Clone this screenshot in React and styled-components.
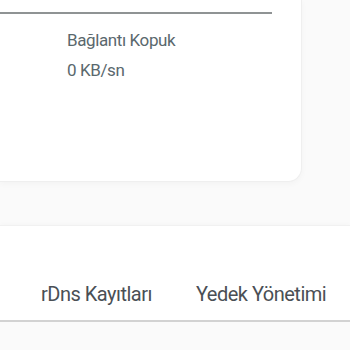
import React from "react";
import styled, { createGlobalStyle } from "styled-components";

const Global = createGlobalStyle`
  html, body { margin: 0; padding: 0; background: #fafafa; }
  body { font-family: Roboto, "Noto Sans", sans-serif; }
`;

const Page = styled.div`
  width: 350px;
  height: 350px;
  overflow: hidden;
  display: flex;
  flex-direction: column;
`;

const Card = styled.div`
  width: 302px;
  height: 182px;
  box-sizing: border-box;
  background: #fff;
  border-right: 1px solid #efefef;
  border-bottom: 1px solid #efefef;
  border-bottom-right-radius: 14px;
  box-shadow: 0 2px 6px rgba(0, 0, 0, 0.03);
  padding-top: 12px;
  display: flex;
  flex-direction: column;
`;

const Divider = styled.div`
  width: 272px;
  height: 2px;
  background: #8f9394;
`;

const Info = styled.div`
  padding-left: 67px;
  padding-top: 11px;
  display: flex;
  flex-direction: column;
`;

const InfoLine = styled.div`
  font-size: 17px;
  line-height: 30px;
  color: #5a686d;
  letter-spacing: -0.4px;
`;

const TabBar = styled.div`
  margin-top: 43px;
  height: 97px;
  box-sizing: border-box;
  background: #fff;
  border-top: 1px solid #f1f1f1;
  border-bottom: 2px solid #d2d2d2;
  box-shadow: 0 -2px 4px rgba(0, 0, 0, 0.015);
  display: flex;
  align-items: flex-end;
  padding-left: 41px;
  padding-bottom: 12px;
  gap: 44px;
`;

const Tab = styled.div`
  font-size: 20px;
  line-height: 28px;
  color: #4a4f55;
  letter-spacing: -0.5px;
  white-space: nowrap;
`;

export default function App() {
  return (
    <Page>
      <Global />
      <Card>
        <Divider />
        <Info>
          <InfoLine>Bağlantı Kopuk</InfoLine>
          <InfoLine>0 KB/sn</InfoLine>
        </Info>
      </Card>
      <TabBar>
        <Tab>rDns Kayıtları</Tab>
        <Tab>Yedek Yönetimi</Tab>
      </TabBar>
    </Page>
  );
}
